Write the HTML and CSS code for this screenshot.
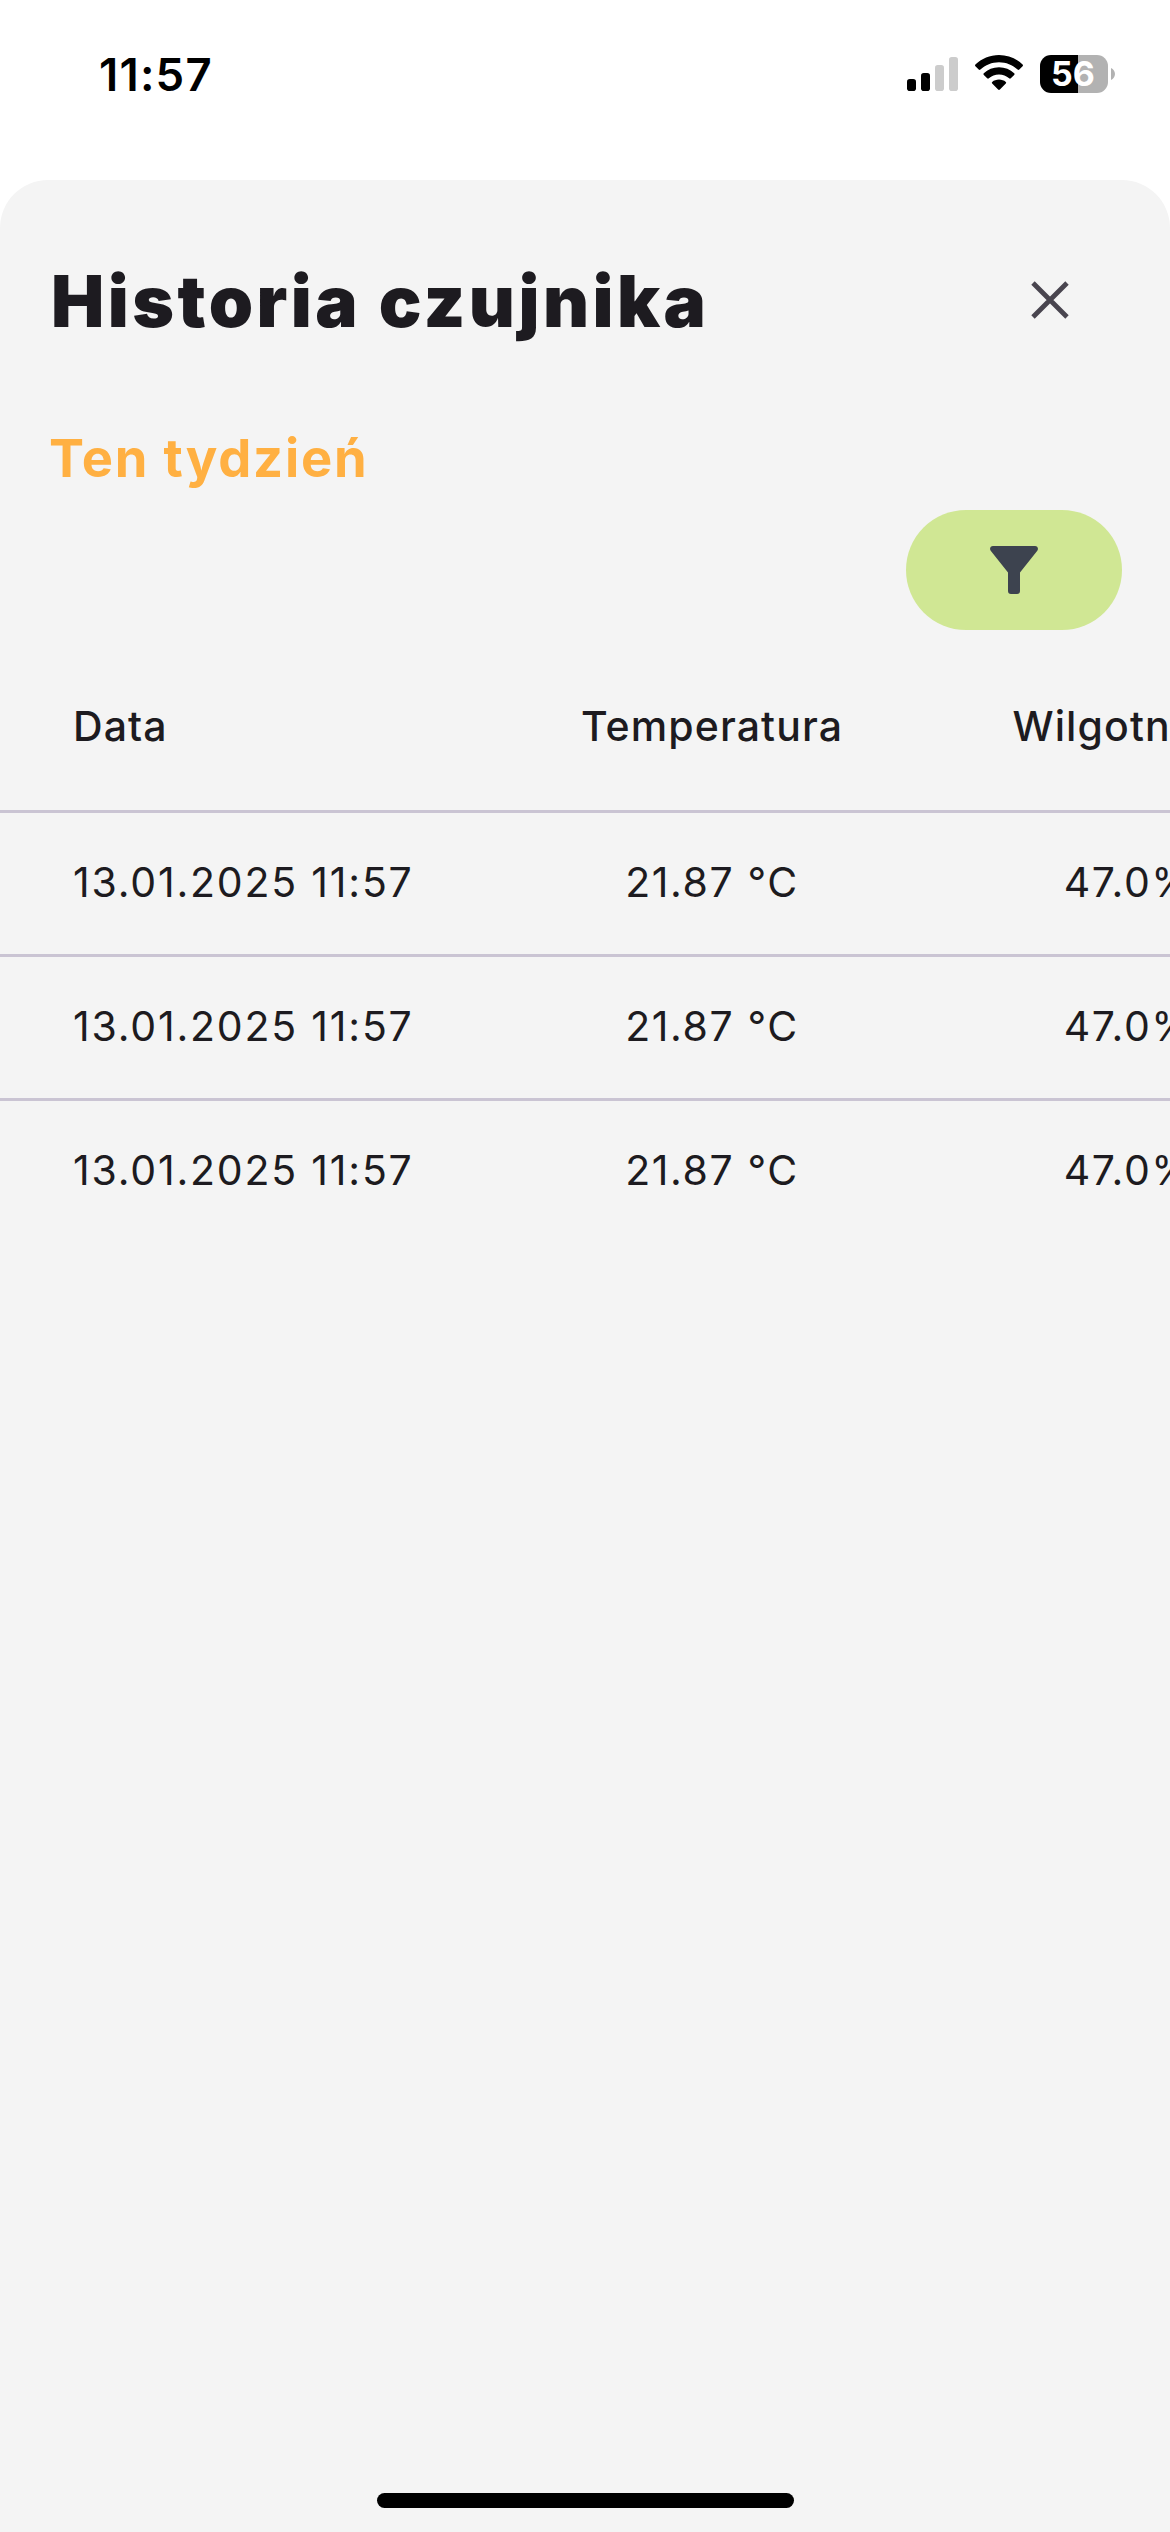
FILE: index.html
```html
<!DOCTYPE html>
<html lang="pl">
<head>
<meta charset="utf-8">
<title>Historia czujnika</title>
<link rel="stylesheet" href="styles.css">
</head>
<body>
<div class="screen">
  <header class="status-bar">
    <span class="clock">11:57</span>
    <div class="indicators">
      <svg class="signal" width="51" height="36" viewBox="0 0 51 36">
        <rect x="0" y="23" width="9" height="12" rx="2.8"/>
        <rect x="14" y="17" width="9" height="18" rx="2.8"/>
        <rect class="dim" x="28" y="9" width="9" height="26" rx="2.8"/>
        <rect class="dim" x="42" y="1" width="9" height="34" rx="2.8"/>
      </svg>
      <svg class="wifi" width="48" height="36" viewBox="0 0 48 36">
        <path d="M24 0C33 0 41.500 3.600 47.600 9.500Q48.400 10.300 47.600 11.200L44.300 14.600Q43.500 15.400 42.600 14.600C37.700 9.900 31 7.200 24 7.200S10.300 9.900 5.400 14.600Q4.500 15.400 3.700 14.600L.4 11.200Q-.4 10.300.4 9.500C6.500 3.600 15 0 24 0Z"/>
        <path d="M24 12.300C29.900 12.300 35.200 14.500 39.200 18.200Q40.100 19 39.200 19.900L35.800 23.300Q35 24.100 34.100 23.300C31.400 21 27.900 19.600 24 19.600S16.600 21 13.900 23.300Q13 24.100 12.200 23.300L8.800 19.900Q7.900 19 8.800 18.200C12.800 14.500 18.100 12.300 24 12.300Z"/>
        <path d="M24 24.600C26.700 24.600 29 25.500 30.800 26.900Q31.700 27.700 30.800 28.600L24.900 34.600Q24 35.500 23.100 34.600L17.200 28.600Q16.300 27.700 17.200 26.900C19 25.500 21.300 24.600 24 24.600Z"/>
      </svg>
      <div class="battery">
        <div class="battery-body">56</div>
        <svg class="battery-cap" width="4" height="12" viewBox="0 0 4 12"><path d="M0 0C2.400 1.200 4 3.400 4 6S2.400 10.800 0 12Z"/></svg>
      </div>
    </div>
  </header>

  <main class="sheet">
    <div class="title-row">
      <h1 class="title">Historia czujnika</h1>
      <button class="close" aria-label="Zamknij">
        <svg width="38" height="38" viewBox="0 0 38 38"><path d="M2 2L36 36M36 2L2 36"/></svg>
      </button>
    </div>
    <h2 class="period">Ten tydzień</h2>
    <div class="actions">
      <button class="filter" aria-label="Filtruj">
        <svg width="48" height="48" viewBox="0 0 48 48"><path d="M3 0H45C47.500 0 48.800 2.700 47.300 4.700L30 26.500V45Q30 48 27 48H21Q18 48 18 45V26.500L.7 4.700C-.8 2.700.5 0 3 0Z"/></svg>
      </button>
    </div>
    <div class="table">
      <div class="row head"><span>Data</span><span class="temp">Temperatura</span><span class="humidity">Wilgotność</span></div>
      <div class="row"><span class="date">13.01.2025 11:57</span><span class="temp">21.87 °C</span><span class="humidity">47.0%</span></div>
      <div class="row"><span class="date">13.01.2025 11:57</span><span class="temp">21.87 °C</span><span class="humidity">47.0%</span></div>
      <div class="row"><span class="date">13.01.2025 11:57</span><span class="temp">21.87 °C</span><span class="humidity">47.0%</span></div>
    </div>
    <div class="home-indicator"></div>
  </main>
</div>
</body>
</html>
```
FILE: styles.css
```css
* { box-sizing: border-box; }

body {
  margin: 0;
  background: #fff;
  color: #1d1b20;
  font-family: Inter, "Liberation Sans", sans-serif;
}

button { border: 0; padding: 0; background: none; }
svg { display: block; }

.screen {
  display: flex;
  flex-direction: column;
  width: 1170px;
  height: 2532px;
  overflow: hidden;
}

.status-bar {
  display: flex;
  justify-content: space-between;
  height: 180px;
  padding: 44px 55px 0 99px;
  color: #000;
}

.clock {
  font-size: 45.500px;
  font-weight: 600;
  line-height: 61px;
  letter-spacing: 1.2px;
}

.indicators { display: flex; align-items: flex-start; padding-top: 11px; }
.signal { margin-top: 1px; }
.signal .dim { fill: #ccc; }
.wifi { margin-left: 17px; }
.battery { display: flex; align-items: center; gap: 3px; margin-left: 17px; }
.battery-body {
  width: 68px;
  height: 38px;
  padding-right: 2px;
  border-radius: 11px;
  background: linear-gradient(to right, #000 38px, #b2b2b2 38px);
  color: #fff;
  font-size: 34px;
  font-weight: 650;
  line-height: 38px;
  text-align: center;
}
.battery-cap { fill: #b2b2b2; }

.sheet {
  display: flex;
  flex-direction: column;
  flex: 1;
  border-radius: 48px 48px 0 0;
  background: #f4f4f4;
}

.title-row {
  display: flex;
  justify-content: space-between;
  align-items: center;
  height: 120px;
  margin-top: 60px;
  padding: 0 60px 0 51px;
}
.title {
  margin: 0;
  padding-top: 2px;
  font-size: 71px;
  font-weight: 900;
  line-height: 120px;
  letter-spacing: 3.500px;
}
.close {
  display: flex;
  justify-content: center;
  align-items: center;
  width: 120px;
  height: 120px;
}
.close svg { fill: none; stroke: #49454f; stroke-width: 4.800; }

.period {
  margin: 60px 0 0;
  padding-left: 49px;
  color: #ffb042;
  font-size: 52.500px;
  font-weight: 680;
  line-height: 76px;
  letter-spacing: 1.800px;
}

.actions {
  display: flex;
  justify-content: flex-end;
  margin-top: 14px;
  padding-right: 48px;
}
.filter {
  display: flex;
  justify-content: center;
  align-items: center;
  width: 216px;
  height: 120px;
  border-radius: 60px;
  background: #d0e794;
}
.filter svg { fill: #3d434f; }

.table { overflow: hidden; margin-top: 12px; }
.row {
  display: grid;
  grid-template-columns: 429px 420px 416px;
  align-items: center;
  width: 1341px;
  height: 144px;
  padding: 0 0 3px 73px;
  font-size: 41px;
  line-height: 60px;
  letter-spacing: 1.6px;
}
.row + .row { border-top: 3px solid #cac4d3; }
.head {
  align-items: flex-start;
  height: 168px;
  padding-top: 54px;
  font-weight: 500;
  letter-spacing: 1.100px;
}
.date { letter-spacing: 1.800px; }
.temp, .humidity { text-align: center; }
.humidity { padding-right: 3px; }

.home-indicator {
  width: 417px;
  height: 15px;
  margin: auto auto 24px;
  border-radius: 8px;
  background: #000;
}
```
